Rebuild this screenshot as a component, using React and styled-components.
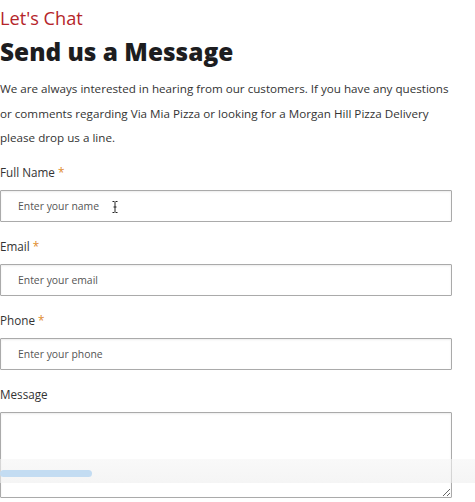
import React from "react";
import styled, { createGlobalStyle } from "styled-components";

const Global = createGlobalStyle`
  html, body {
    margin: 0;
    padding: 0;
    background: #fff;
  }
  body {
    font-family: "Open Sans", "Liberation Sans", sans-serif;
    color: #333;
  }
`;

const Page = styled.div`
  position: relative;
  width: 475px;
  height: 502px;
  overflow: hidden;
  padding: 4px 0 0 0;
  box-sizing: border-box;
`;

const Kicker = styled.div`
  color: #b5252a;
  font-size: 18.2px;
  line-height: 28px;
`;

const Title = styled.h2`
  margin: 4px 0 0;
  font-size: 24.4px;
  font-weight: 800;
  line-height: 32px;
  color: #1d1d1f;
`;

const Intro = styled.p`
  margin: 9px 0 0;
  font-size: 11.65px;
  line-height: 24.5px;
  color: #333;
  width: 456px;
`;

const Form = styled.form`
  display: flex;
  flex-direction: column;
  gap: 14px;
  margin-top: 11px;
  width: 452px;
`;

const Field = styled.div`
  display: flex;
  flex-direction: column;
  gap: 8px;
`;

const Label = styled.label`
  font-size: 11.7px;
  line-height: 20px;
  color: #333;

  span {
    color: #e08a2c;
  }
`;

const InputWrap = styled.div`
  position: relative;
`;

const Input = styled.input`
  box-sizing: border-box;
  width: 100%;
  height: 32px;
  border: 1px solid #aaa;
  border-radius: 1px;
  box-shadow: inset 0 1px 2px rgba(0, 0, 0, 0.08);
  padding: 0 0 0 17px;
  font-family: inherit;
  font-size: 10.4px;
  color: #333;
  outline: none;

  &::placeholder {
    color: #555;
  }
`;

const TextArea = styled.textarea`
  box-sizing: border-box;
  width: 100%;
  height: 86px;
  border: 1px solid #aaa;
  border-radius: 1px;
  box-shadow: inset 0 1px 2px rgba(0, 0, 0, 0.08);
  font-family: inherit;
  resize: vertical;
  display: block;
`;

const Caret = styled.svg`
  position: absolute;
  left: 112px;
  top: 11px;
`;

const ScrollStrip = styled.div`
  position: absolute;
  left: 0;
  right: 0;
  top: 459px;
  height: 24px;
  background: linear-gradient(rgba(245, 245, 245, 0.6), rgba(238, 238, 238, 0.6));
`;

const Thumb = styled.div`
  position: absolute;
  left: 0;
  top: 11px;
  width: 92px;
  height: 7px;
  border-radius: 4px;
  background: #c3dcf2;
`;

const fields = [
  { id: "name", label: "Full Name", placeholder: "Enter your name", caret: true },
  { id: "email", label: "Email", placeholder: "Enter your email" },
  { id: "phone", label: "Phone", placeholder: "Enter your phone" },
];

export default function App() {
  return (
    <Page>
      <Global />
      <Kicker>Let's Chat</Kicker>
      <Title>Send us a Message</Title>
      <Intro>
        We are always interested in hearing from our customers. If you have any
        questions or comments regarding Via Mia Pizza or looking for a Morgan
        Hill Pizza Delivery please drop us a line.
      </Intro>
      <Form>
        {fields.map((f) => (
          <Field key={f.id}>
            <Label htmlFor={f.id}>
              {f.label} <span>*</span>
            </Label>
            <InputWrap>
              <Input id={f.id} placeholder={f.placeholder} />
              {f.caret && (
                <Caret width="6" height="12" viewBox="0 0 6 12">
                  <path
                    d="M0.5 0.5h2M3.5 0.5h2M3 1v10M0.5 11.5h2M3.5 11.5h2M1.5 6h3"
                    stroke="#222"
                    strokeWidth="1"
                    fill="none"
                  />
                </Caret>
              )}
            </InputWrap>
          </Field>
        ))}
        <Field>
          <Label htmlFor="message">Message</Label>
          <TextArea id="message" />
        </Field>
      </Form>
      <ScrollStrip>
        <Thumb />
      </ScrollStrip>
    </Page>
  );
}
